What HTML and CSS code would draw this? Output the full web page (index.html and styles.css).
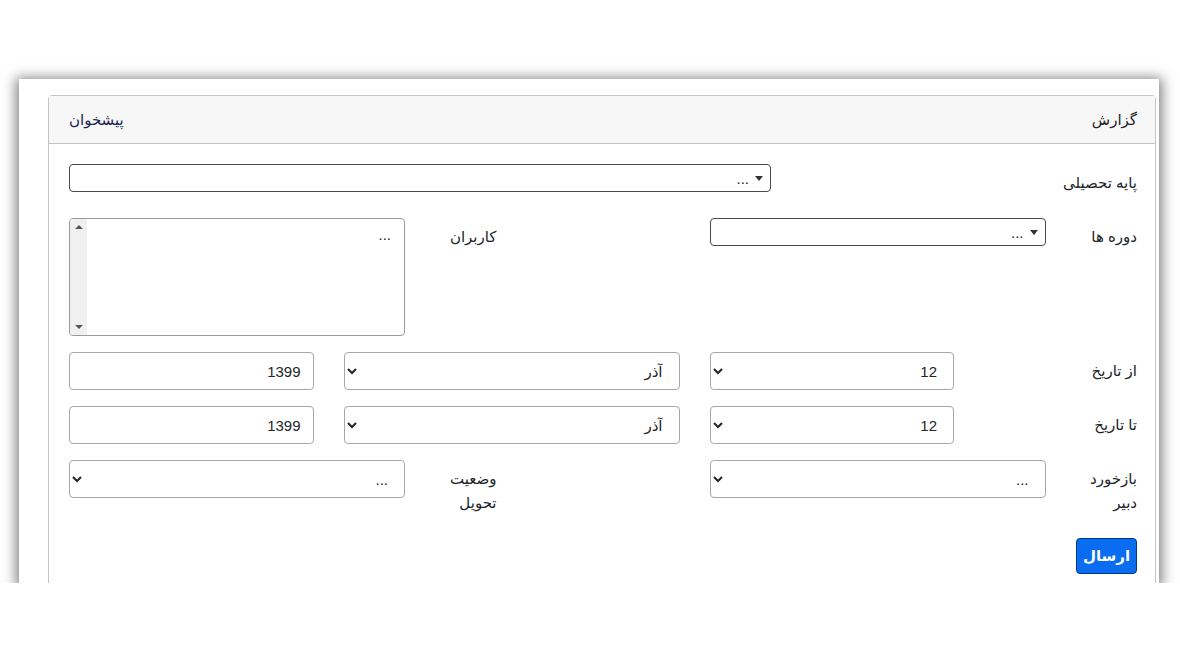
FILE: index.html
```html
<!DOCTYPE html>
<html lang="fa" dir="rtl">
<head>
  <meta charset="UTF-8" />
  <title>گزارش</title>
  <link rel="stylesheet" href="styles.css">
</head>
<body>
  <div class="frame">
    <div class="card">
      <div class="card-header">
        <span>گزارش</span>
        <a href="#" class="home-link">پیشخوان</a>
      </div>

      <form class="card-body">
        <div class="form-row">
          <label class="col-4">پایه تحصیلی</label>
          <div class="col-8">
            <div class="picker"><span class="caret"></span><span>...</span></div>
          </div>
        </div>

        <div class="form-row">
          <label class="col-1">دوره ها</label>
          <div class="col-4">
            <div class="picker"><span class="caret"></span><span>...</span></div>
          </div>
          <div class="col-2"></div>
          <label class="col-1">کاربران</label>
          <div class="col-4">
            <div class="listbox">
              <div class="listbox-items">...</div>
              <div class="scrollbar">
                <span class="arrow-up"></span>
                <span class="arrow-down"></span>
              </div>
            </div>
          </div>
        </div>

        <div class="form-row">
          <label class="col-2">از تاریخ</label>
          <div class="col-3">
            <select class="form-control"><option>12</option></select>
          </div>
          <div class="col-4">
            <select class="form-control"><option>آذر</option></select>
          </div>
          <div class="col-3">
            <input type="text" class="form-control" value="1399">
          </div>
        </div>

        <div class="form-row">
          <label class="col-2">تا تاریخ</label>
          <div class="col-3">
            <select class="form-control"><option>12</option></select>
          </div>
          <div class="col-4">
            <select class="form-control"><option>آذر</option></select>
          </div>
          <div class="col-3">
            <input type="text" class="form-control" value="1399">
          </div>
        </div>

        <div class="form-row">
          <label class="col-1">بازخورد دبیر</label>
          <div class="col-4">
            <select class="form-control"><option>...</option></select>
          </div>
          <div class="col-2"></div>
          <label class="col-1">وضعیت تحویل</label>
          <div class="col-4">
            <select class="form-control"><option>...</option></select>
          </div>
        </div>

        <button type="submit" class="btn-send">ارسال</button>
      </form>
    </div>
  </div>
</body>
</html>
```

FILE: styles.css
```css
* {
  box-sizing: border-box;
}

body {
  margin: 0;
  background: #fff;
  font-family: "Liberation Sans", "DejaVu Sans", sans-serif;
  font-size: 15px;
  color: #212529;
}

.frame {
  width: 1140px;
  height: 504px;
  margin: 79px 21px 0 19px;
  padding: 16px 3px 0 29px;
  background: #fff;
  overflow: hidden;
  box-shadow: 0 2px 12px 3px rgba(0, 0, 0, 0.5);
}

.card {
  border: 1px solid #c4c4c4;
  border-radius: 4px 4px 0 0;
  background: #fff;
}

.card-header {
  display: flex;
  justify-content: space-between;
  align-items: center;
  background: #f7f7f7;
  border-bottom: 1px solid #c4c4c4;
  padding: 12px 18px 11px 20px;
  line-height: 24px;
}

.home-link {
  color: #1b2451;
  text-decoration: none;
}

.card-body {
  padding: 20px 18px 20px 20px;
}

.form-row {
  display: grid;
  grid-template-columns: repeat(12, 1fr);
  column-gap: 30px;
  align-items: start;
  margin-bottom: 16px;
}

.form-row label {
  padding: 7px 0;
  line-height: 24px;
}

.col-1 { grid-column: span 1; }
.col-2 { grid-column: span 2; }
.col-3 { grid-column: span 3; }
.col-4 { grid-column: span 4; }
.col-8 { grid-column: span 8; }

.picker {
  display: flex;
  align-items: center;
  gap: 6px;
  height: 28px;
  padding: 0 7px;
  border: 1px solid #4a4a4a;
  border-radius: 4px;
  background: #fff;
  color: #222;
}

.caret {
  width: 0;
  height: 0;
  border-left: 4px solid transparent;
  border-right: 4px solid transparent;
  border-top: 5px solid #333;
}

.listbox {
  display: flex;
  height: 118px;
  border: 1px solid #9a9a9a;
  border-radius: 4px;
  overflow: hidden;
}

.listbox-items {
  flex: 1;
  padding: 4px 13px;
  line-height: 24px;
}

.scrollbar {
  width: 17px;
  background: #f0f0f0;
  display: flex;
  flex-direction: column;
  justify-content: space-between;
  align-items: center;
  padding: 6px 0;
}

.arrow-up,
.arrow-down {
  width: 0;
  height: 0;
  border-left: 4px solid transparent;
  border-right: 4px solid transparent;
}

.arrow-up {
  border-bottom: 4px solid #555;
}

.arrow-down {
  border-top: 4px solid #555;
}

.form-control {
  display: block;
  width: 100%;
  height: 38px;
  padding: 6px 12px;
  font-family: "Liberation Sans", "DejaVu Sans", sans-serif;
  font-size: 15px;
  color: #212529;
  background-color: #fff;
  border: 1px solid #a8a8a8;
  border-radius: 4px;
}

input.form-control {
  text-align: right;
}

.btn-send {
  display: block;
  width: 61px;
  height: 36px;
  padding: 0;
  font-family: "Liberation Sans", "DejaVu Sans", sans-serif;
  font-size: 15px;
  font-weight: bold;
  color: #fff;
  background: #0a6cf0;
  border: 1px solid #00388a;
  border-radius: 4px;
  cursor: pointer;
}
```
